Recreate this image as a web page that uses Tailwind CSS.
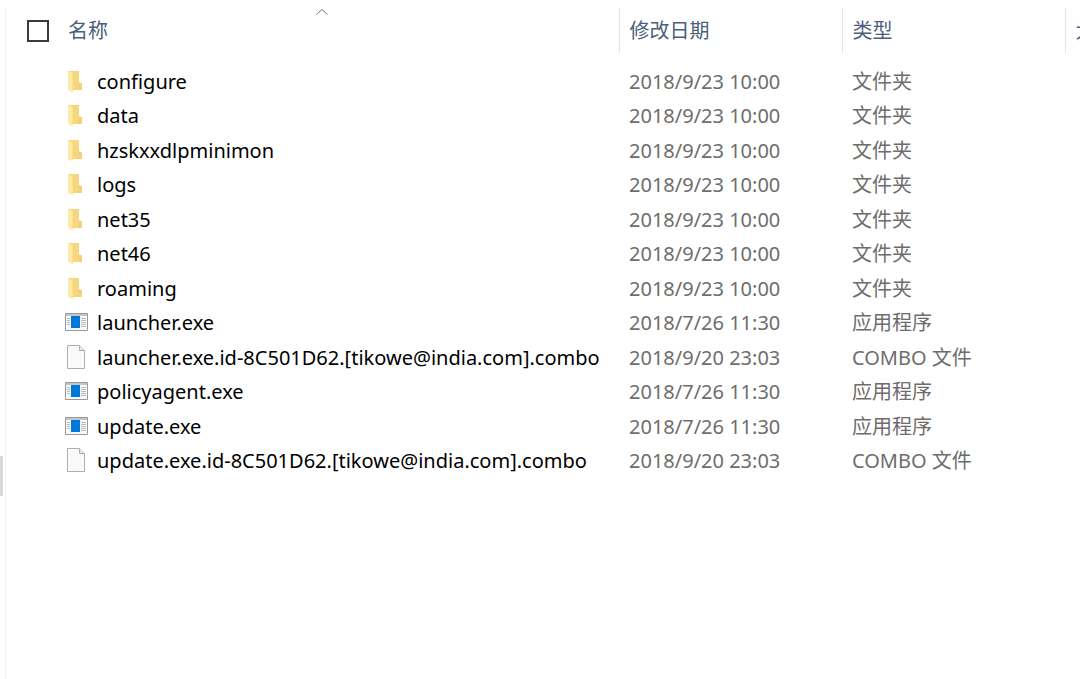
<!DOCTYPE html>
<html lang="zh-CN" class="h-full">
<head>
    <meta charset="UTF-8">
    <meta name="viewport" content="width=device-width, initial-scale=1.0">
    <title>文件资源管理器</title>
    <script src="https://cdn.jsdelivr.net/npm/@tailwindcss/browser@4"></script>
</head>
<body class="h-full flex overflow-hidden bg-white text-xl leading-7 font-['Noto_Sans','Noto_Sans_CJK_SC',sans-serif]">

    <svg class="hidden">
        <symbol id="folder" viewBox="0 0 22 24">
            <path d="M3 2H14V13L17 15V21H7L3 19Z" fill="#f6d67f"/>
            <path d="M3 2L7 4V23L3 21Z" fill="#ffe9a6"/>
            <path d="M7 4L8 5V22L7 23Z" fill="#fae08f"/>
            <path d="M13 14H17V21H13Z" fill="#f3d277"/>
        </symbol>
        <symbol id="exe" viewBox="0 0 24 20">
            <path d="M.5 1.5H22.5V18.5H.5Z" fill="#f7f7f7" stroke="#9a9a9a"/>
            <path d="M1 2H22V4H1Z" fill="#c3c6c8"/>
            <path d="M6 4H15V16H6Z" fill="#0078d7"/>
            <path d="M2 6.5H5M2 8.5H5M2 10.5H5M2 12.5H5M16 6.5H21M16 8.5H21M16 10.5H21M16 12.5H21M16 14.5H21" stroke="#bcbcbc"/>
        </symbol>
        <symbol id="file" viewBox="0 0 22 24">
            <path d="M2.5 .5H14.5L19.5 5.5V23.5H2.5Z" fill="#f8f9f9" stroke="#adadad"/>
            <path d="M14.5 .5V5.5H19.5" fill="#e8e8e8" stroke="#adadad"/>
        </symbol>
    </svg>

    <aside class="w-[5px] shrink-0 pt-[456px]">
        <div class="w-[3px] h-10 bg-[#d9d9d9]"></div>
    </aside>

    <main class="grow min-w-0 mt-2 pl-5 border-l border-[#edf2f4] overflow-hidden">
        <table class="w-full table-fixed text-left text-[#6d6d6d]">
            <thead class="text-[#4c607a]">
                <tr class="h-[45px]">
                    <th class="relative w-[593px] p-0 font-normal border-r border-[#e5e5e5]">
                        <div class="flex items-center">
                            <input id="all" type="checkbox" aria-label="全选" class="appearance-none size-[22px] ml-px mr-[19px] border-2 border-[#3a3a3a] bg-white">
                            <button type="button">名称</button>
                        </div>
                        <svg class="absolute top-0 left-1/2 -translate-x-1/2 w-3 h-2" viewBox="0 0 12 8" fill="none" stroke="#777"><path d="M.5 6.5L6 1.5L11.5 6.5"/></svg>
                    </th>
                    <th class="w-[223px] py-0 pl-[10px] font-normal border-r border-[#e5e5e5]"><button type="button">修改日期</button></th>
                    <th class="w-[223px] py-0 pl-[10px] font-normal border-r border-[#e5e5e5]"><button type="button">类型</button></th>
                    <th class="py-0 pl-[10px] font-normal whitespace-nowrap"><button type="button">大小</button></th>
                </tr>
                <tr class="h-[11px]"></tr>
            </thead>
            <tbody id="files"></tbody>
        </table>
    </main>

    <script>
        const files = [
            ["folder", "configure", "2018/9/23 10:00", "文件夹"],
            ["folder", "data", "2018/9/23 10:00", "文件夹"],
            ["folder", "hzskxxdlpminimon", "2018/9/23 10:00", "文件夹"],
            ["folder", "logs", "2018/9/23 10:00", "文件夹"],
            ["folder", "net35", "2018/9/23 10:00", "文件夹"],
            ["folder", "net46", "2018/9/23 10:00", "文件夹"],
            ["folder", "roaming", "2018/9/23 10:00", "文件夹"],
            ["exe", "launcher.exe", "2018/7/26 11:30", "应用程序"],
            ["file", "launcher.exe.id-8C501D62.[tikowe@india.com].combo", "2018/9/20 23:03", "COMBO 文件"],
            ["exe", "policyagent.exe", "2018/7/26 11:30", "应用程序"],
            ["exe", "update.exe", "2018/7/26 11:30", "应用程序"],
            ["file", "update.exe.id-8C501D62.[tikowe@india.com].combo", "2018/9/20 23:03", "COMBO 文件"],
        ]

        const icons = {
            folder: `<svg class="w-[22px] h-6 shrink-0"><use href="#folder"/></svg>`,
            exe: `<svg class="w-6 h-5 shrink-0"><use href="#exe"/></svg>`,
            file: `<svg class="w-[22px] h-6 shrink-0"><use href="#file"/></svg>`,
        }

        document.getElementById("files").innerHTML = files.map(([icon, name, date, type]) => `
            <tr class="odd:h-[35px] even:h-[34px] whitespace-nowrap">
                <td class="p-0 pl-[39px] text-black">
                    <div class="flex items-center">
                        <span class="w-8 flex pb-0.5">${icons[icon]}</span>
                        <span>${name}</span>
                    </div>
                </td>
                <td class="py-0 pl-[10px]">${date}</td>
                <td class="py-0 pl-[10px]">${type}</td>
                <td></td>
            </tr>`).join("")
    </script>

</body>
</html>
